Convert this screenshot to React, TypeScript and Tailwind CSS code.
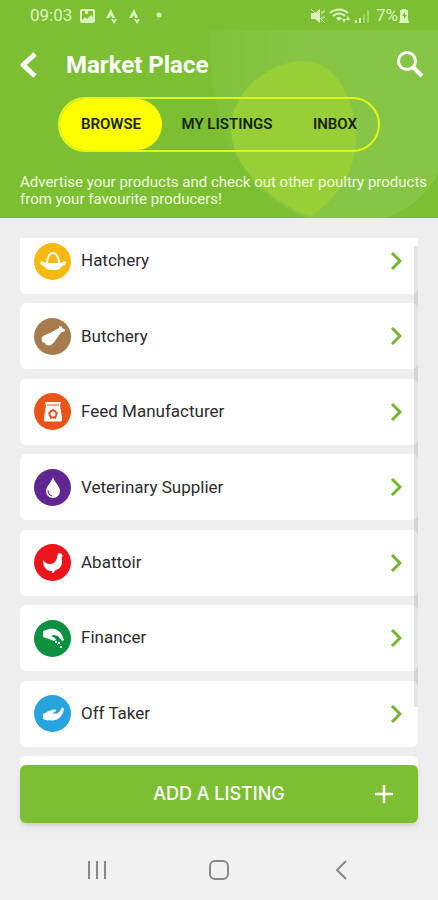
import type { ReactNode } from 'react'

interface Category {
    name: string
    color: string
    icon: ReactNode
}

const categories: Category[] = [
    {
        name: 'Hatchery',
        color: 'bg-[#f6b90f]',
        icon: (
            <>
                <path d="M12 20c0-6 3-10 6-10s6 4 6 10" fill="none" stroke="#fff" strokeWidth="2" />
                <path d="M5 19l2-1c2 2 5 2 11 2s9 0 11-2l2 1-1 3-3 1c-2 4-5 4-9 4s-7 0-9-4l-3-1z" />
            </>
        )
    },
    {
        name: 'Butchery',
        color: 'bg-[#a67c4f]',
        icon: (
            <path d="M7 19c2-2 5-3 8-4l9-5 .5-2 2 .5 1 2 2.5 1-.5 2-3 .5-6 8c-2 3-4 5.500-7 5.500-2 0-3-1-3.500-2.500C7 25 6 22 7 19z" />
        )
    },
    {
        name: 'Feed Manufacturer',
        color: 'bg-[#ea5419]',
        icon: (
            <>
                <path d="M10 8h16l-1 4c1 5 2 10 2 14 0 1-1 1.500-2 1.500H11c-1 0-2-.5-2-1.500 0-4 1-9 2-14z" />
                <path d="M12 11h12" stroke="#ea5419" strokeWidth="1" />
                <circle cx="18" cy="20" r="3.500" fill="none" stroke="#ea5419" strokeWidth="2" />
                <path d="M18 14.500l1.500 2.500h-3zM13 18.500l2.500 0-1 2.500zM23 18.500l-2.500 0 1 2.500zM15 25l0-3 2.500 2zM21 25l0-3-2.500 2z" fill="#ea5419" />
            </>
        )
    },
    {
        name: 'Veterinary Supplier',
        color: 'bg-[#5f2590]',
        icon: (
            <>
                <path d="M18 8c1 5 7 9 7 14a7 7 0 0 1-14 0c0-5 6-9 7-14z" />
                <path d="M13 21c0 3 1 5 4 6" fill="none" stroke="#5f2590" strokeWidth="1" />
            </>
        )
    },
    {
        name: 'Abattoir',
        color: 'bg-[#ec151c]',
        icon: (
            <path d="M8 15c1 2 4 4 7 4 4 0 6-3 7-6 0-3 1-5 3-5 1 0 2 1 2 2l1 1-1.500 1c.5 3 1 6 0 8-1 3-4 4.500-6 5l-2 3h-2l1-2c-5 0-7-2-8.500-5C8 19 8 17 8 15z" />
        )
    },
    {
        name: 'Financer',
        color: 'bg-[#0b9140]',
        icon: (
            <>
                <path d="M8 11l6-2c6-1 11 2 13 6l2 5-2 1-4-5-4-1-3 1 4 2 1 2-2 1-5-2-6-2z" />
                <path d="M20 21h2v2h-2zM23 22h2v2h-2zM22 24h1v1h-1zM25 26h2v2h-2z" />
            </>
        )
    },
    {
        name: 'Off Taker',
        color: 'bg-[#27a4dd]',
        icon: (
            <path d="M8 18c3-1 5-3.500 9-4 3-1 5 0 4 1l-4 2.500 5 0c2-1 4-3 4.500-5.500 1.500-1 3 0 2 3-1 4-4 8-8 9-3 1-6 0-8 .5L8 23z" />
        )
    }
]

const tabs = [
    { label: 'BROWSE', style: 'w-[102px] rounded-full bg-[#ffff00]' },
    { label: 'MY LISTINGS', style: 'flex-1' },
    { label: 'INBOX', style: 'w-[86px]' }
]

function StatusBar() {
    return (
        <div className="flex h-8 items-center justify-between pr-7 pl-[30px] text-[17px] text-[#dcf3c0]">
            <div className="flex items-center gap-2">
                <span>09:03</span>
                <svg width="82" height="16" viewBox="0 0 82 16" fill="currentColor" aria-hidden="true">
                    <path fillRule="evenodd" d="M2 1h11q2 0 2 2v10q0 2-2 2H2q-2 0-2-2V3q0-2 2-2zm0 2v9l3-3 2 2 4-4 2 2V3h-5v3H5V3z" />
                    <path d="M26 10l5-9 4 9h-3l-1-3-2 3zM31 11h2l1 2 1-2h2l-3 5zM49 10l5-9 4 9h-3l-1-3-2 3zM54 11h2l1 2 1-2h2l-3 5z" />
                    <circle cx="79" cy="7" r="2.500" />
                </svg>
            </div>
            <div className="flex items-center gap-1">
                <svg width="62" height="16" viewBox="0 0 62 16" fill="currentColor" aria-hidden="true">
                    <path d="M1 5h4l5-4v14l-5-4H1z" />
                    <path d="M1 1l14 14M12 3v3M14 2v3M12 9v2M14 8v2" stroke="currentColor" strokeWidth="1" />
                    <path d="M20 5q9-7 18 0M23 8q6-5 12 0" fill="none" stroke="currentColor" strokeWidth="2" />
                    <path d="M26 10q3-2 6 0l-3 3zM32 11l2 4 2-4zM36 12l2-4 2 4z" />
                    <path d="M45 12h2v3h-2zM49 10h2v5h-2z" />
                    <path d="M53 6h2v9h-2zM57 2h2v13h-2z" opacity=".4" />
                </svg>
                <div className="flex items-center">
                    <span>7%</span>
                    <svg width="12" height="16" viewBox="0 0 12 16" fill="currentColor" aria-hidden="true">
                        <path fillRule="evenodd" d="M4 1h4v1h2v9l1 4H1l1-4V2h2zm3 3L4 8h2v3l3-4H7z" />
                    </svg>
                </div>
            </div>
        </div>
    )
}

function CategoryRow({ category }: { category: Category }) {
    return (
        <li className="shrink-0">
            <button type="button" className="flex h-[66px] w-full items-center rounded-md bg-white pr-4 pl-[14px]">
                <span className={`flex size-[37px] items-center justify-center rounded-full ${category.color}`}>
                    <svg width="36" height="36" viewBox="0 0 36 36" fill="#fff" aria-hidden="true">
                        {category.icon}
                    </svg>
                </span>
                <span className="ml-[10px] flex-1 text-left text-[17px] text-[#2c2c2c]">{category.name}</span>
                <svg width="12" height="18" viewBox="0 0 12 18" fill="none" stroke="#72b62b" strokeWidth="3" aria-hidden="true">
                    <path d="M2 1l8 8-8 8" />
                </svg>
            </button>
        </li>
    )
}

export default function App() {
    return (
        <div className="flex min-h-screen flex-col bg-[#eee] font-[Roboto,sans-serif]">
            <header className="relative isolate overflow-hidden bg-[#7cbf33] pb-[10px] text-white">
                {/* Shield and egg artwork */}
                <svg className="absolute top-0 right-0 -z-10" width="438" height="218" viewBox="0 0 438 218" aria-hidden="true">
                    <defs>
                        <linearGradient id="shield" x1="0" y1="0" x2="1" y2="0">
                            <stop offset="0" stopColor="#80c13b" />
                            <stop offset=".4" stopColor="#86c545" />
                        </linearGradient>
                    </defs>
                    <path d="M209 30h229v143q-14 30-52 45h-80C236 190 209 120 209 30z" fill="url(#shield)" />
                    <path d="M303 61c31 0 53 36 53 76 0 38-22 64-46 80-44-18-79-52-79-88 0-36 37-68 72-68z" fill="#99cf36" />
                </svg>

                <StatusBar />

                <div className="flex h-[65px] items-center pr-[14px] pl-[19px]">
                    <button type="button" aria-label="Back">
                        <svg width="19" height="28" viewBox="0 0 19 28" fill="none" stroke="#fff" strokeWidth="5" strokeLinejoin="round">
                            <path d="M16 3L4 14l12 11" />
                        </svg>
                    </button>
                    <h1 className="ml-7 flex-1 text-2xl font-bold">Market Place</h1>
                    <button type="button" aria-label="Search">
                        <svg width="28" height="28" viewBox="0 0 28 28" fill="none" stroke="#fff">
                            <circle cx="11" cy="10" r="8.500" strokeWidth="3" />
                            <path d="M17 16l9 9" strokeWidth="4" />
                        </svg>
                    </button>
                </div>

                <nav className="mx-[58px] flex h-[55px] rounded-full border-2 border-[#e1f51b]">
                    {tabs.map((tab) => (
                        <button key={tab.label} type="button" className={`text-[15px] font-semibold text-[#16240a] ${tab.style}`}>
                            {tab.label}
                        </button>
                    ))}
                </nav>

                <p className="mt-[22px] pr-2 pl-5 text-[15px] leading-[17px] text-[#eefadf]">
                    Advertise your products and check out other poultry products from your favourite producers!
                </p>
            </header>

            <main className="flex flex-1 flex-col px-5 pt-5 pb-[17px]">
                <div className="relative flex flex-1 flex-col overflow-hidden">
                    <ul className="-mt-[10px] flex flex-1 flex-col justify-between gap-2">
                        {categories.map((category) => (
                            <CategoryRow key={category.name} category={category} />
                        ))}
                        <li className="h-[9px] rounded-t-md bg-white" />
                    </ul>
                    {/* Scroll indicator */}
                    <div className="absolute top-2 right-0 bottom-[58px] w-1 bg-black/10" />
                </div>

                <button
                    type="button"
                    className="relative flex h-[58px] items-center justify-center rounded-md bg-[#7cbf33] font-[Inter,sans-serif] text-lg font-medium text-white shadow-md"
                >
                    ADD A LISTING
                    <svg className="absolute right-[25px]" width="18" height="18" viewBox="0 0 18 18" stroke="#fff" strokeWidth="2.500" aria-hidden="true">
                        <path d="M9 0v18M0 9h18" />
                    </svg>
                </button>
            </main>

            {/* System navigation */}
            <nav className="flex h-[60px] items-center justify-between bg-[#f1f1f1] px-[86px]">
                <button type="button" aria-label="Recent apps">
                    <svg width="20" height="20" viewBox="0 0 20 20" stroke="#888" strokeWidth="2">
                        <path d="M3 1v18M11 1v18M19 1v18" />
                    </svg>
                </button>
                <button type="button" aria-label="Home">
                    <svg width="20" height="20" viewBox="0 0 20 20" fill="none" stroke="#888" strokeWidth="2">
                        <rect x="1" y="1" width="18" height="18" rx="5" />
                    </svg>
                </button>
                <button type="button" aria-label="System back">
                    <svg width="20" height="20" viewBox="0 0 20 20" fill="none" stroke="#888" strokeWidth="2">
                        <path d="M14 1L5 10l9 9" />
                    </svg>
                </button>
            </nav>
        </div>
    )
}
